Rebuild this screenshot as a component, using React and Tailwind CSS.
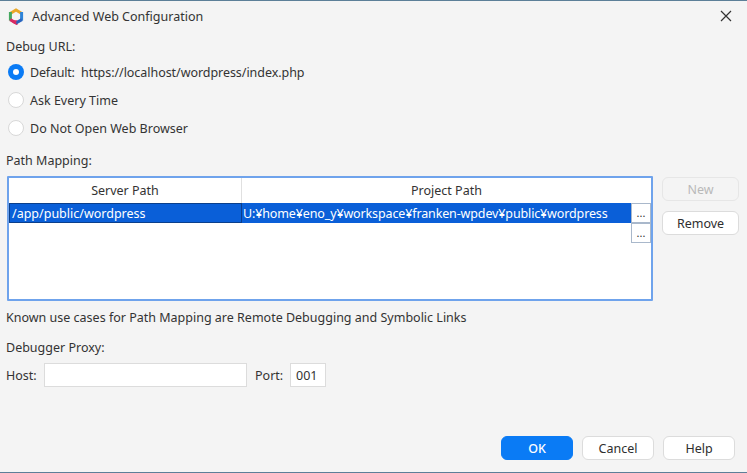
const font = { fontFamily: '"Noto Sans", "Open Sans", sans-serif' };

function Radio({ checked, children }) {
  return (
    <div className="flex items-center h-[20px]">
      {checked ? (
        <span className="w-[16px] h-[16px] ml-[8px] rounded-full bg-[#0a7bf5] flex items-center justify-center">
          <span className="w-[6px] h-[6px] rounded-full bg-white" />
        </span>
      ) : (
        <span className="w-[16px] h-[16px] ml-[8px] rounded-full bg-white border border-[#d8d8d8]" />
      )}
      <span className="ml-[6px] pt-[1px] flex whitespace-pre">{children}</span>
    </div>
  );
}

function Btn({ children, primary, disabled, className = "" }) {
  const base = "flex items-center justify-center rounded-[6px] border pt-[1px] ";
  const tone = primary
    ? "bg-[#0a7bf5] border-[#0a7bf5] text-white font-medium"
    : disabled
    ? "bg-[#f4f4f4] border-[#e6e6e6] text-[#b9b9b9]"
    : "bg-white border-[#dcdcdc] text-[#2e2e2e]";
  return <div className={base + tone + " " + className}>{children}</div>;
}

function Dots({ className = "" }) {
  return (
    <div className={"w-[20px] h-[20px] bg-white border border-[#a9b8cb] flex items-center justify-center text-[11px] leading-none text-[#333] pb-[1px] " + className}>
      ...
    </div>
  );
}

export default function App() {
  return (
    <div style={font} className="w-[747px] h-[473px] bg-[#f4f4f4] border-y border-y-[#5c7f98] text-[12.5px] leading-[18px] text-[#333] flex flex-col overflow-hidden">
      <div className="h-[30px] flex items-center shrink-0">
        <svg className="ml-[8px]" width="16" height="17" viewBox="0 0 16 17">
          <path d="M2.6 5.2 L8 2 L13.4 5.2" fill="none" stroke="#eaa828" strokeWidth="3" />
          <path d="M2.4 4 L2.4 12.6" fill="none" stroke="#45a860" strokeWidth="3" />
          <path d="M13.6 4 L13.6 12.6" fill="none" stroke="#2f84d8" strokeWidth="3" />
          <path d="M2.2 11.6 L8 15 L8 12.2" fill="none" stroke="#d82a62" strokeWidth="3" />
          <path d="M8 15 L13.8 11.6" fill="none" stroke="#2a63bd" strokeWidth="3" />
          <path d="M8 15 L5 13.2" fill="none" stroke="#d82a62" strokeWidth="3" />
        </svg>
        <span className="ml-[8px] pt-[1px]">Advanced Web Configuration</span>
        <svg className="ml-auto mr-[15px]" width="12" height="12" viewBox="0 0 12 12">
          <path d="M1 1 L11 11 M11 1 L1 11" stroke="#333" strokeWidth="1.2" />
        </svg>
      </div>

      <div className="pl-[6px] mt-[7px] h-[18px]">Debug URL:</div>

      <div className="mt-[6px] flex flex-col gap-[8px]">
        <Radio checked>
          <span className="w-[51px] tracking-[-0.2px]">Default:</span>
          <span className="tracking-[-0.05px]">https://localhost/wordpress/index.php</span>
        </Radio>
        <Radio>Ask Every Time</Radio>
        <Radio>Do Not Open Web Browser</Radio>
      </div>

      <div className="pl-[6px] mt-[14px] h-[18px]">Path Mapping:</div>

      <div className="flex mt-[6px] pl-[7px]">
        <div className="relative w-[646px] h-[125px] border-2 border-[#6fa3ec] bg-white rounded-[1px]">
          <div className="flex h-[25px]">
            <div className="w-[233px] flex items-center justify-center border-r border-r-[#e0e0e0]">Server Path</div>
            <div className="flex-1 flex items-center justify-center">Project Path</div>
          </div>
          <div className="flex h-[20px] bg-[#0a5fd8] text-white">
            <div className="w-[233px] pl-[2px] pt-[1px] flex items-center border border-[#0a3f8c] bg-[#0a5fd8]">/app/public/wordpress</div>
            <div className="flex-1 pl-[1px] pt-[1px] flex items-center whitespace-pre tracking-[-0.13px]">U:¥home¥eno_y¥workspace¥franken-wpdev¥public¥wordpress</div>
          </div>
          <div className="absolute right-0 top-[25px] flex flex-col">
            <Dots />
            <Dots />
          </div>
        </div>
        <div className="ml-[9px] flex flex-col gap-[10px] pt-[1px]">
          <Btn disabled className="w-[77px] h-[24px]">New</Btn>
          <Btn className="w-[77px] h-[24px]">Remove</Btn>
        </div>
      </div>

      <div className="pl-[6px] mt-[8px] h-[18px]">Known use cases for Path Mapping are Remote Debugging and Symbolic Links</div>
      <div className="pl-[6px] mt-[12px] h-[18px]">Debugger Proxy:</div>

      <div className="flex items-center mt-[6px] pl-[6px]">
        <span className="w-[38px] pt-[1px]">Host:</span>
        <div className="w-[203px] h-[24px] bg-white border border-[#dcdcdc]" />
        <span className="ml-[8px] w-[35px] pt-[1px]">Port:</span>
        <div className="w-[36px] h-[24px] bg-white border border-[#dcdcdc] flex items-center pl-[5px] pt-[1px]">001</div>
      </div>

      <div className="mt-auto mb-[12px] flex justify-end pr-[12px] gap-[9px]">
        <Btn primary className="w-[72px] h-[24px]">OK</Btn>
        <Btn className="w-[72px] h-[24px]">Cancel</Btn>
        <Btn className="w-[72px] h-[24px]">Help</Btn>
      </div>
    </div>
  );
}
